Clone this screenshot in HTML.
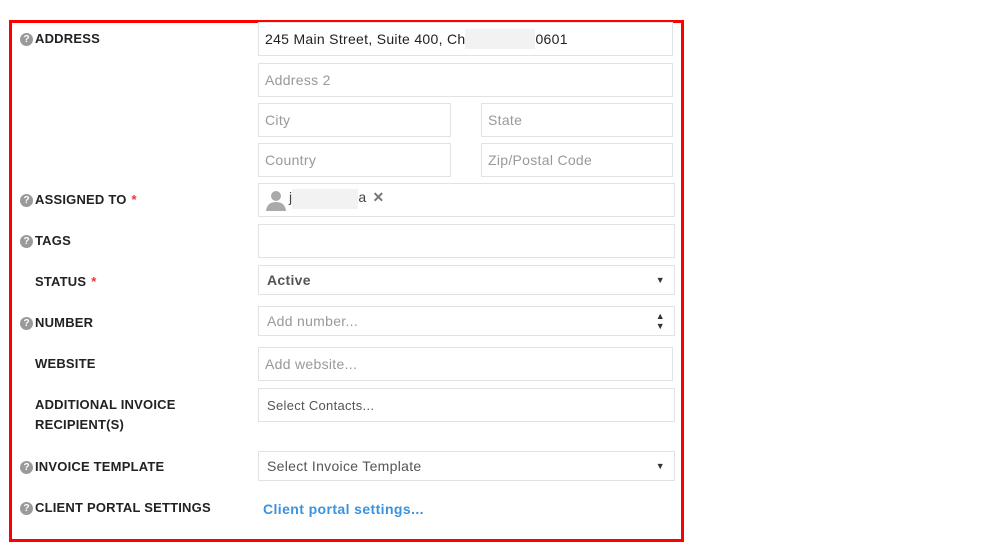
<!DOCTYPE html>
<html><head><style>
body{margin:0;width:991px;height:549px;background:#fff;font-family:"Liberation Sans",sans-serif;position:relative;overflow:hidden}
.frame{position:absolute;left:9px;top:20px;width:669px;height:516px;border:3px solid #f00}
.l{position:absolute;left:35px;font-size:13px;font-weight:bold;color:#222;line-height:20px;letter-spacing:0.2px}
.q{position:absolute;left:20px;width:13px;height:13px;border-radius:50%;background:#9a9a9a;color:#fff;font-size:10px;font-weight:bold;text-align:center;line-height:13px}
.r{color:#e33;margin-left:5px}
.i{position:absolute;border:1px solid #e2e2e2;box-sizing:border-box;font-size:14px;color:#999;padding-left:6px;display:flex;align-items:center;letter-spacing:0.3px}
.d{color:#555;padding-left:8px}
.ar{position:absolute;right:9px;font-size:9px;color:#333}
</style></head><body>
<div class="frame"></div>

<div class="q" style="top:33px">?</div><div class="l" style="top:29px">ADDRESS</div>
<div class="q" style="top:194px">?</div><div class="l" style="top:190px">ASSIGNED TO<span class="r">*</span></div>
<div class="q" style="top:235px">?</div><div class="l" style="top:231px">TAGS</div>
<div class="l" style="top:272px">STATUS<span class="r">*</span></div>
<div class="q" style="top:317px">?</div><div class="l" style="top:313px">NUMBER</div>
<div class="l" style="top:354px">WEBSITE</div>
<div class="l" style="top:395px">ADDITIONAL INVOICE<br>RECIPIENT(S)</div>
<div class="q" style="top:461px">?</div><div class="l" style="top:457px">INVOICE TEMPLATE</div>
<div class="q" style="top:502px">?</div><div class="l" style="top:498px">CLIENT PORTAL SETTINGS</div>

<div class="i" style="left:258px;top:22px;width:415px;height:34px;color:#222">245 Main Street, Suite 400, Ch<span style="display:inline-block;width:70px;height:20px;background:#f2f2f2"></span>0601</div>
<div class="i" style="left:258px;top:63px;width:415px;height:34px">Address 2</div>
<div class="i" style="left:258px;top:103px;width:193px;height:34px">City</div>
<div class="i" style="left:481px;top:103px;width:192px;height:34px">State</div>
<div class="i" style="left:258px;top:143px;width:193px;height:34px">Country</div>
<div class="i" style="left:481px;top:143px;width:192px;height:34px">Zip/Postal Code</div>
<div class="i" style="left:258px;top:183px;width:417px;height:34px;color:#444;align-items:flex-start;padding-top:5px">
<svg width="22" height="22" viewBox="0 0 22 22" style="margin-right:2px"><circle cx="11" cy="7" r="5" fill="#aaa"/><path d="M1 22 Q2 13 11 13 Q20 13 21 22Z" fill="#aaa"/></svg>j<span style="display:inline-block;width:66px;height:20px;background:#f2f2f2"></span>a <span style="margin-left:6px;color:#777;font-weight:bold">✕</span></div>
<div class="i" style="left:258px;top:224px;width:417px;height:34px"></div>
<div class="i d" style="left:258px;top:265px;width:417px;height:30px;font-weight:bold">Active<span class="ar">▼</span></div>
<div class="i d" style="left:258px;top:306px;width:417px;height:30px;color:#999">Add number...<span class="ar" style="line-height:10px">▲<br>▼</span></div>
<div class="i" style="left:258px;top:347px;width:415px;height:34px">Add website...</div>
<div class="i d" style="left:258px;top:388px;width:417px;height:34px;font-size:13px">Select Contacts...</div>
<div class="i d" style="left:258px;top:451px;width:417px;height:30px">Select Invoice Template<span class="ar">▼</span></div>
<div style="position:absolute;left:263px;top:501px;font-size:14px;font-weight:bold;color:#3a92e0;letter-spacing:0.4px">Client portal settings...</div>
</body></html>
